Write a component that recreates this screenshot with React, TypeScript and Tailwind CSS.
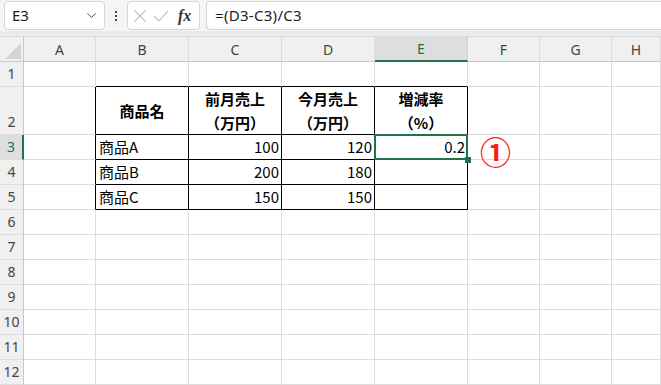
import { ChevronDown } from "lucide-react";

const cols = ["A", "B", "C", "D", "E", "F", "G", "H"];
const rowHeights = [25, 48, 25, 25, 25, 25, 25, 25, 25, 25, 25, 25];

type Cell = { text?: string; sub?: string; align?: "left" | "right" | "center"; bold?: boolean };

const data: Record<string, Cell> = {
  B2: { text: "商品名", align: "center", bold: true },
  C2: { text: "前月売上", sub: "（万円）", align: "center", bold: true },
  D2: { text: "今月売上", sub: "（万円）", align: "center", bold: true },
  E2: { text: "増減率", sub: "（%）", align: "center", bold: true },
  B3: { text: "商品A" },
  C3: { text: "100", align: "right" },
  D3: { text: "120", align: "right" },
  E3: { text: "0.2", align: "right" },
  B4: { text: "商品B" },
  C4: { text: "200", align: "right" },
  D4: { text: "180", align: "right" },
  B5: { text: "商品C" },
  C5: { text: "150", align: "right" },
  D5: { text: "150", align: "right" },
};

const inTable = (c: number, r: number) => c >= 1 && c <= 4 && r >= 2 && r <= 5;

export default function App() {
  return (
    <div className="h-[385px] w-[661px] overflow-hidden bg-white font-['Noto_Sans','Noto_Sans_CJK_JP',sans-serif]">
      {/* formula bar */}
      <div className="flex h-[31px] items-start gap-[6px] bg-[#f5f5f5] pl-[4px] pt-[1px]">
        <div className="flex h-[29px] w-[101px] items-center justify-between rounded-[4px] border border-[#d6d6d6] bg-white pl-[7px] pr-[5px] text-[15px] text-[#222]">
          <span>E3</span>
          <ChevronDown size={15} strokeWidth={1.5} className="text-[#444]" />
        </div>
        <div className="flex h-[29px] w-[10px] flex-col items-center justify-center gap-[2px]">
          <span className="h-[2px] w-[2px] bg-[#444]" />
          <span className="h-[2px] w-[2px] bg-[#444]" />
          <span className="h-[2px] w-[2px] bg-[#444]" />
        </div>
        <div className="flex h-[29px] w-[73px] items-center gap-[6px] rounded-[4px] border border-[#d6d6d6] bg-white pl-[5px]">
          <svg width="14" height="14" viewBox="0 0 14 14" fill="none" stroke="#c4c4c4" strokeWidth="1.2">
            <path d="M1 1 L13 13 M13 1 L1 13" />
          </svg>
          <svg width="16" height="12" viewBox="0 0 16 12" fill="none" stroke="#c4c4c4" strokeWidth="1.2">
            <path d="M1 6 L6 11 L15 1" />
          </svg>
          <span className="ml-[3px] font-['Liberation_Serif',serif] text-[16px] font-bold italic leading-none text-[#333]">
            fx
          </span>
        </div>
        <div className="flex h-[29px] flex-1 items-center rounded-l-[4px] border border-r-0 border-[#d6d6d6] bg-white pl-[8px] text-[15px] tracking-[0.3px] text-[#222]">
          =(D3-C3)/C3
        </div>
      </div>
      <div className="h-[6px] border-b border-[#dcdcdc] bg-[#e9ebee]" />

      {/* sheet */}
      <div className="grid grid-cols-[24px_72px_93px_93px_93px_93px_72px_72px_1fr]">
        {/* column header */}
        <div className="relative h-[25px] border-r border-b border-[#c8c8c8] bg-[#f0f0f0]">
          <svg className="absolute right-[2px] bottom-[2px]" width="16" height="16" viewBox="0 0 16 16">
            <path d="M16 0 L16 16 L0 16 Z" fill="#d4d4d4" />
          </svg>
        </div>
        {cols.map((c) => (
          <div
            key={c}
            className={
              c === "E"
                ? "flex h-[25px] items-center justify-center border-r border-b-2 border-r-[#d0d0d0] border-b-[#217346] bg-[#dedede] text-[14px] text-[#217346]"
                : "flex h-[25px] items-center justify-center border-r border-b border-r-[#dcdcdc] border-b-[#c8c8c8] bg-[#f0f0f0] text-[14px] text-[#444]"
            }
          >
            {c}
          </div>
        ))}

        {rowHeights.map((h, ri) => {
          const r = ri + 1;
          return [
            <div
              key={`rh${r}`}
              style={{ height: h }}
              className={
                r === 3
                  ? "flex items-end justify-center border-r-2 border-b border-r-[#217346] border-b-[#dcdcdc] bg-[#dedede] pb-[2px] text-[14px] leading-[20px] text-[#217346]"
                  : "flex items-end justify-center border-r border-b border-r-[#c8c8c8] border-b-[#dcdcdc] bg-[#f0f0f0] pb-[2px] text-[14px] leading-[20px] text-[#444]"
              }
            >
              {r}
            </div>,
            ...cols.map((c, ci) => {
              const col = ci;
              const key = `${c}${r}`;
              const cell = data[key];
              const rightBlack = inTable(col, r) || (col === 0 && r >= 2 && r <= 5);
              const bottomBlack = inTable(col, r) || (r === 1 && col >= 1 && col <= 4);
              const align =
                cell?.align === "right" ? "justify-end text-right pr-[2px]" : cell?.align === "center" ? "justify-center text-center" : "justify-start pl-[3px]";
              return (
                <div
                  key={key}
                  style={{ height: h }}
                  className={`relative flex items-center border-r border-b ${rightBlack ? "border-r-black" : "border-r-[#dcdcdc]"} ${bottomBlack ? "border-b-black" : "border-b-[#dcdcdc]"} ${align} font-['Noto_Sans_CJK_JP',sans-serif] text-[15px] text-black`}
                >
                  {cell && (
                    <div className={`flex flex-col leading-[24px] ${cell.bold ? "font-bold" : ""} ${cell.align === "center" ? "items-center" : ""}`}>
                      <span>{cell.text}</span>
                      {cell.sub && <span>{cell.sub}</span>}
                    </div>
                  )}
                  {key === "E3" && (
                    <>
                      <div className="absolute -top-px -left-px -right-px -bottom-px border-2 border-[#217346]" />
                      <div className="absolute -right-[4px] -bottom-[4px] z-10 h-[6px] w-[6px] bg-[#217346]" />
                    </>
                  )}
                  {key === "F3" && (
                    <span className="absolute left-[12px] top-[1px] font-['Noto_Sans_CJK_JP',sans-serif] text-[31px] font-bold leading-[30px] text-[#ff1a1a]">
                      ①
                    </span>
                  )}
                </div>
              );
            }),
          ];
        })}
      </div>
    </div>
  );
}
